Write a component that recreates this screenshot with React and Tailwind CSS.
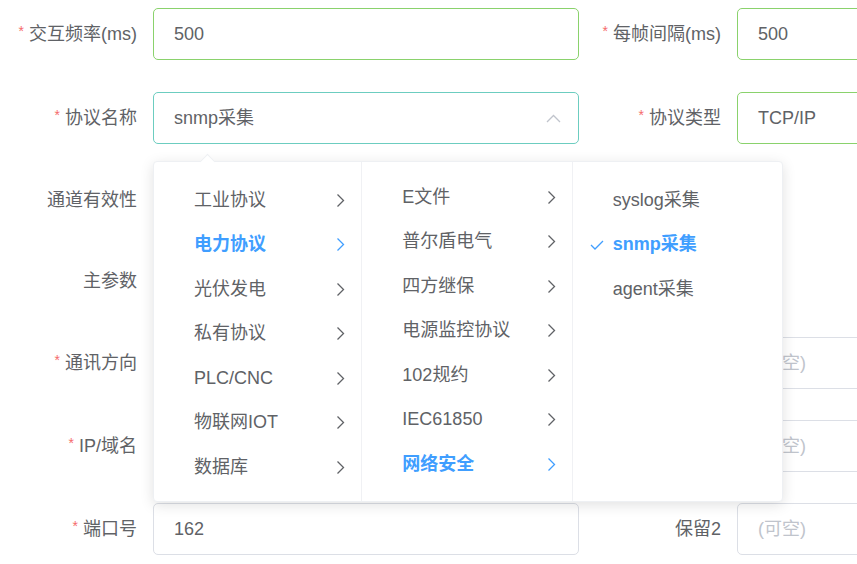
import React from "react";

const Star = () => <span className="mr-[5px] text-[14px] text-[#f56c6c] align-top">*</span>;

function Label({ text, req, w = "w-[153px]" }) {
  return (
    <div className={`${w} shrink-0 pr-4 text-right text-[18px] text-[#606266]`}>
      {req && <Star />}
      {text}
    </div>
  );
}

function Input({ value, placeholder, border = "border-[#dcdfe6]", children }) {
  return (
    <div
      className={`relative flex h-[52px] w-[426px] shrink-0 items-center rounded-[5px] border ${border} bg-white px-5 text-[18px]`}
    >
      {value ? (
        <span className="text-[#606266]">{value}</span>
      ) : (
        <span className="text-[#c0c4cc]">{placeholder}</span>
      )}
      {children}
    </div>
  );
}

const Chevron = ({ active }) => (
  <svg width="9" height="15" viewBox="0 0 9 15" fill="none">
    <path
      d="M1.5 1.5 L7.5 7.5 L1.5 13.5"
      stroke={active ? "#409eff" : "#606266"}
      strokeWidth="1.3"
    />
  </svg>
);

function MenuItem({ text, active, arrow = true, check = false }) {
  return (
    <div
      className={`relative flex h-[44.5px] items-center justify-between pl-10 pr-[16px] text-[18px] ${
        active ? "font-bold text-[#409eff]" : "text-[#606266]"
      }`}
    >
      {check && (
        <svg className="absolute left-[17px]" width="14" height="10" viewBox="0 0 14 10" fill="none">
          <path d="M1 5 L5 9 L13 1" stroke="#409eff" strokeWidth="1.3" />
        </svg>
      )}
      <span>{text}</span>
      {arrow && <Chevron active={active} />}
    </div>
  );
}

const col1 = ["工业协议", "电力协议", "光伏发电", "私有协议", "PLC/CNC", "物联网IOT", "数据库"];
const col2 = ["E文件", "普尔盾电气", "四方继保", "电源监控协议", "102规约", "IEC61850", "网络安全"];
const col3 = ["syslog采集", "snmp采集", "agent采集"];

export default function App() {
  return (
    <div className="relative h-[564px] w-[857px] overflow-hidden bg-white font-['Liberation_Sans','Noto_Sans_CJK_SC',sans-serif]">
      <div className="flex flex-col pt-[8px]">
        {/* row 1 */}
        <div className="flex h-[52px] items-center">
          <Label text="交互频率(ms)" req />
          <Input value="500" border="border-[#8ad26c]" />
          <Label text="每帧间隔(ms)" req w="w-[158px]" />
          <Input value="500" border="border-[#8ad26c]" />
        </div>

        {/* row 2 */}
        <div className="mt-[32px] flex h-[52px] items-center">
          <Label text="协议名称" req />
          <Input value="snmp采集" border="border-[#6ccdc0]">
            <svg className="absolute right-[17px]" width="15" height="9" viewBox="0 0 15 9" fill="none">
              <path d="M1 8 L7.5 1.5 L14 8" stroke="#c0c4cc" strokeWidth="1.3" />
            </svg>
          </Input>
          <Label text="协议类型" req w="w-[158px]" />
          <Input value="TCP/IP" border="border-[#8ad26c]" />
        </div>

        {/* row 3 */}
        <div className="mt-[30px] flex h-[52px] items-center">
          <Label text="通道有效性" />
          <div className="h-[26px] w-[52px] rounded-full bg-[#6ccdc0]" />
        </div>

        {/* row 4 */}
        <div className="mt-[29px] flex h-[52px] items-center">
          <Label text="主参数" />
        </div>

        {/* row 5 */}
        <div className="mt-[30px] flex h-[52px] items-center">
          <Label text="通讯方向" req />
          <Input placeholder="" />
          <Label text="" w="w-[158px]" />
          <Input placeholder="(可空)" />
        </div>

        {/* row 6 */}
        <div className="mt-[31px] flex h-[52px] items-center">
          <Label text="IP/域名" req />
          <Input placeholder="" />
          <Label text="" w="w-[158px]" />
          <Input placeholder="(可空)" />
        </div>

        {/* row 7 */}
        <div className="mt-[31px] flex h-[52px] items-center">
          <Label text="端口号" req />
          <Input value="162" />
          <Label text="保留2" w="w-[158px]" />
          <Input placeholder="(可空)" />
        </div>
      </div>

      {/* cascader dropdown */}
      <div className="absolute left-[153px] top-[161px] h-[341px] w-[630px] rounded-[4px] border border-[#eef0f3] bg-white shadow-[0_3px_14px_rgba(0,0,0,0.12)]">
        <div className="absolute left-[48px] top-[-6px] h-[11px] w-[11px] rotate-45 border-l border-t border-[#eef0f3] bg-white" />
        <div className="flex h-full">
          <div className="w-[209px] border-r border-[#f0f1f4] pt-[16px]">
            {col1.map((t) => (
              <MenuItem key={t} text={t} active={t === "电力协议"} />
            ))}
          </div>
          <div className="w-[211px] border-r border-[#f0f1f4] pt-[13px]">
            {col2.map((t) => (
              <MenuItem key={t} text={t} active={t === "网络安全"} />
            ))}
          </div>
          <div className="w-[210px] pt-[16px]">
            {col3.map((t) => (
              <MenuItem key={t} text={t} active={t === "snmp采集"} check={t === "snmp采集"} arrow={false} />
            ))}
          </div>
        </div>
      </div>
    </div>
  );
}
